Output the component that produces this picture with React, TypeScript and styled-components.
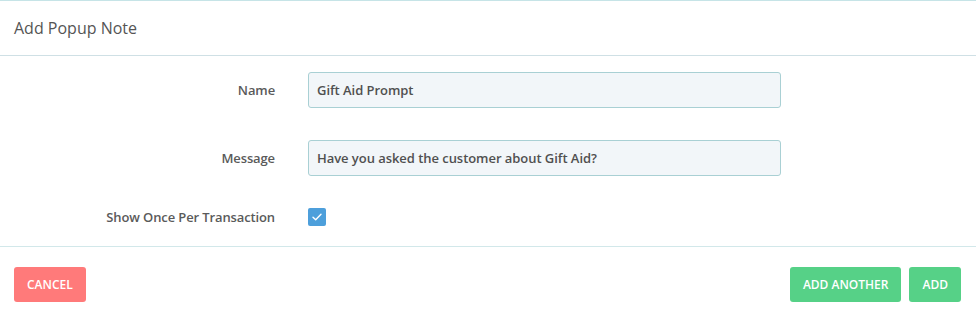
import styled, { createGlobalStyle } from 'styled-components';

const GlobalStyle = createGlobalStyle`
  body {
    margin: 0;
    background: #fff;
    font-family: 'Open Sans', 'Noto Sans', sans-serif;
  }
`;

const Modal = styled.div`
  border-top: 1px solid #c6e4e7;
  background: #fff;
`;

const Header = styled.div`
  height: 54px;
  display: flex;
  align-items: center;
  padding: 0 14px;
  border-bottom: 1px solid #cfe0e5;
`;

const Title = styled.h2`
  margin: 0;
  font-size: 16px;
  font-weight: 400;
  color: #555;
`;

const Body = styled.div`
  display: grid;
  grid-template-columns: 275px 473px;
  column-gap: 33px;
  row-gap: 32px;
  align-items: center;
  padding: 16px 0 20px;
  border-bottom: 1px solid #d2e8ea;
`;

const Label = styled.label`
  text-align: right;
  font-size: 13px;
  font-weight: 600;
  letter-spacing: -0.12px;
  color: #5a5a5a;
`;

const Input = styled.input`
  box-sizing: border-box;
  height: 36px;
  width: 100%;
  padding: 0 8px;
  border: 1px solid #a9d0d4;
  border-radius: 3px;
  background: #f2f6f9;
  font-family: inherit;
  font-size: 13px;
  font-weight: 600;
  letter-spacing: -0.05px;
  color: #505050;
  outline: none;
`;

const Check = styled.span`
  width: 18px;
  height: 18px;
  border-radius: 2px;
  background: #4d9fdb;
  display: flex;
  align-items: center;
  justify-content: center;
`;

const Footer = styled.div`
  display: flex;
  justify-content: space-between;
  padding: 20px 15px 0 14px;
`;

const Group = styled.div`
  display: flex;
  gap: 8px;
`;

const Button = styled.button<{ $tone: 'danger' | 'success' }>`
  height: 35px;
  padding: 0 13px;
  border: 0;
  border-radius: 3px;
  background: ${(p) => (p.$tone === 'danger' ? '#ff7a7a' : '#56d187')};
  color: #fff;
  font-family: inherit;
  font-size: 12px;
  font-weight: 600;
  text-transform: uppercase;
  cursor: pointer;
`;

export default function App() {
  return (
    <>
      <GlobalStyle />
      <Modal>
        <Header>
          <Title>Add Popup Note</Title>
        </Header>
        <Body>
          <Label>Name</Label>
          <Input defaultValue="Gift Aid Prompt" />
          <Label>Message</Label>
          <Input defaultValue="Have you asked the customer about Gift Aid?" />
          <Label>Show Once Per Transaction</Label>
          <Check>
            <svg width="10" height="8" viewBox="0 0 10 8" fill="none">
              <path d="M1 4.2 3.7 6.8 9 1.2" stroke="#fff" strokeWidth="1.4" strokeLinecap="round" strokeLinejoin="round" />
            </svg>
          </Check>
        </Body>
        <Footer>
          <Button $tone="danger">Cancel</Button>
          <Group>
            <Button $tone="success">Add Another</Button>
            <Button $tone="success">Add</Button>
          </Group>
        </Footer>
      </Modal>
    </>
  );
}
